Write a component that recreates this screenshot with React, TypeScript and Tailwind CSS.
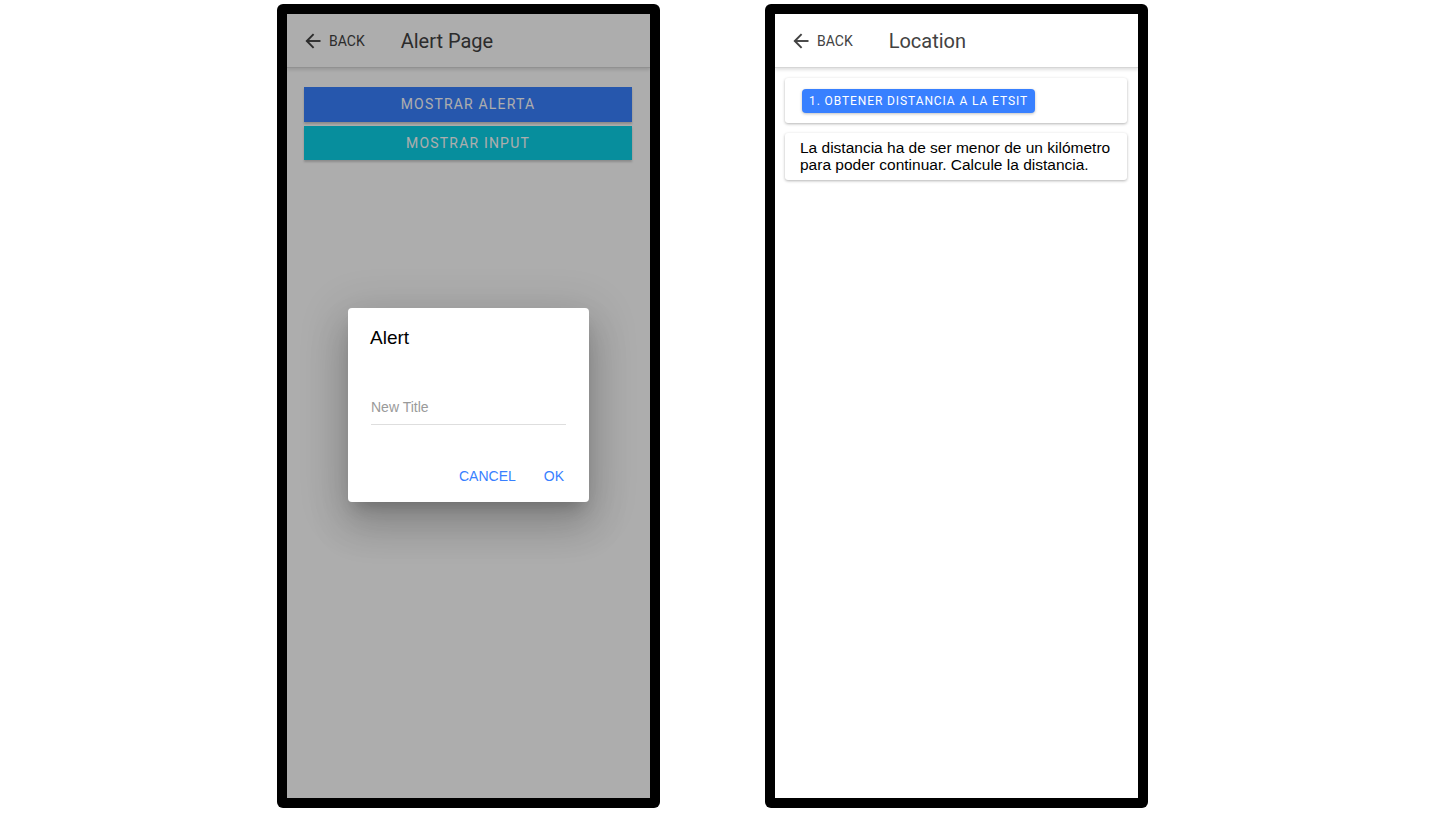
import React from 'react'

const roboto = "font-['Roboto','Liberation_Sans',sans-serif]"
const arial = "font-['Liberation_Sans','Arial',sans-serif]"

function BackArrow() {
  return (
    <svg width="16" height="16" viewBox="0 0 16 16" fill="none" stroke="currentColor" strokeWidth="1.9">
      <path d="M15.5 8H1.8" />
      <path d="M8.6 1.2 1.8 8l6.8 6.8" />
    </svg>
  )
}

function Header({ title }: { title: string }) {
  return (
    <div className="relative z-10 flex h-[54px] shrink-0 items-center border-b border-[#d6d6d6] bg-white pl-[18px] shadow-[0_2px_3px_rgba(0,0,0,0.12)]">
      <div className="flex items-center gap-[8px] text-[#424242]">
        <BackArrow />
        <span className={`${roboto} text-[14px] leading-none`}>BACK</span>
      </div>
      <h1 className={`${roboto} ml-[36px] text-[20px] leading-none text-[#424242]`}>{title}</h1>
    </div>
  )
}

function Phone({ children }: { children: React.ReactNode }) {
  return (
    <div className="h-[804px] w-[383px] shrink-0 rounded-[6px] bg-black p-[10px]">
      <div className="relative flex h-full w-full flex-col overflow-hidden bg-white">{children}</div>
    </div>
  )
}

function AlertScreen() {
  return (
    <Phone>
      <Header title="Alert Page" />
      <div className="flex flex-col gap-[4px] px-[17px] pt-[19px] pr-[18px]">
        <button className={`${roboto} block h-[35px] w-full bg-[#3880ff] text-[14px] tracking-[0.085em] text-white shadow-[0_2px_2px_rgba(0,0,0,0.2)]`}>
          MOSTRAR ALERTA
        </button>
        <button className={`${roboto} block h-[34px] w-full bg-[#0bd1e7] text-[14px] tracking-[0.085em] text-white shadow-[0_2px_2px_rgba(0,0,0,0.2)]`}>
          MOSTRAR INPUT
        </button>
      </div>

      {/* backdrop + dialog */}
      <div className="absolute inset-0 z-20 flex items-center justify-center bg-black/[0.32]">
        <div className="mt-[-2px] flex h-[194px] w-[241px] flex-col rounded-[4px] bg-white shadow-[0_11px_15px_-7px_rgba(0,0,0,0.2),0_24px_38px_3px_rgba(0,0,0,0.14),0_9px_46px_8px_rgba(0,0,0,0.12)]">
          <div className={`${arial} px-[22px] pt-[18px] text-[19px] leading-[24px] text-black`}>Alert</div>
          <div className="mx-[23px] mt-[47px] border-b border-[#dedede] pb-[7px]">
            <div className={`${arial} text-[14px] leading-[20px] text-[#9a9a9a]`}>New Title</div>
          </div>
          <div className={`${arial} mt-auto flex justify-end gap-[28px] pb-[16px] pr-[25px] text-[14px] leading-[20px] text-[#3880ff]`}>
            <span>CANCEL</span>
            <span>OK</span>
          </div>
        </div>
      </div>
    </Phone>
  )
}

function LocationScreen() {
  return (
    <Phone>
      <Header title="Location" />
      <div className="flex flex-col gap-[10px] pl-[10px] pr-[11px] pt-[10px]">
        <div className="h-[45px] rounded-[3px] bg-white pl-[17px] pt-[11px] shadow-[0_1px_3px_rgba(0,0,0,0.3)]">
          <button className={`${roboto} block h-[24px] rounded-[4px] bg-[#3880ff] px-[7px] text-[12px] leading-none tracking-[0.075em] text-white shadow-[0_1px_3px_rgba(0,0,0,0.25)]`}>
            1. OBTENER DISTANCIA A LA ETSIT
          </button>
        </div>
        <div className={`${arial} rounded-[3px] bg-white px-[15px] pb-[7px] pt-[6px] text-[15.5px] leading-[17px] text-black shadow-[0_1px_3px_rgba(0,0,0,0.3)]`}>
          La distancia ha de ser menor de un kilómetro para poder continuar. Calcule la distancia.
        </div>
      </div>
    </Phone>
  )
}

export default function App() {
  return (
    <div className="flex h-[816px] w-[1455px] gap-[105px] bg-white pl-[277px] pt-[4px]">
      <AlertScreen />
      <LocationScreen />
    </div>
  )
}
